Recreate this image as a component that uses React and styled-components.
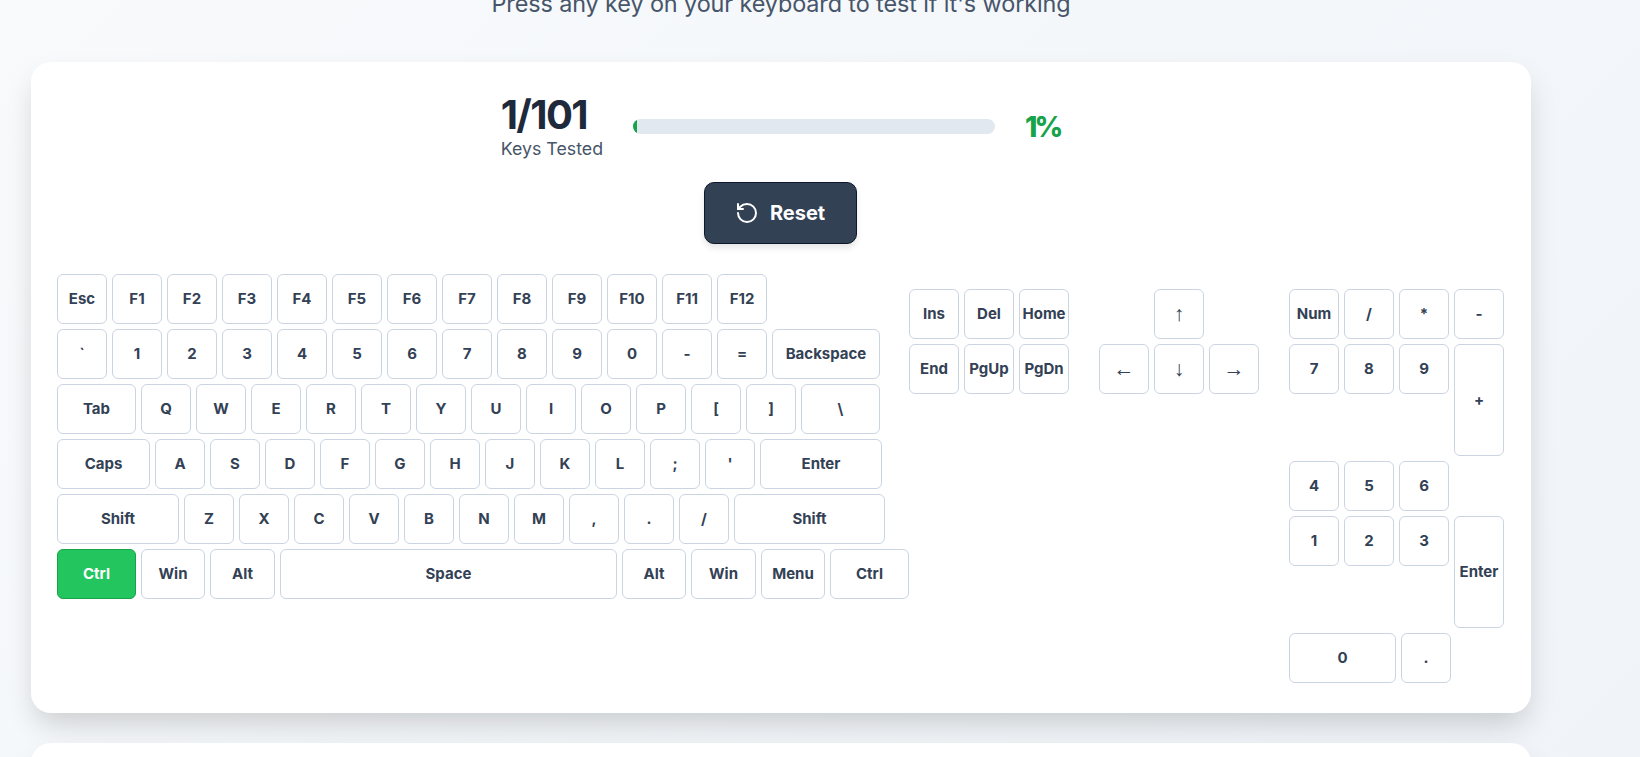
import React from 'react';
import styled, { createGlobalStyle } from 'styled-components';
import { RotateCcw } from 'lucide-react';

const Global = createGlobalStyle`
  html, body { margin: 0; padding: 0; height: 757px; overflow: hidden; }
  body { font-family: Inter, "Noto Sans", sans-serif; background: linear-gradient(135deg, #f8fafc 0%, #f0f4f8 100%); }
`;
const Page = styled.div`
  margin-top: -12px;
  padding: 0 0 0 31px;
  width: 1500px;
`;
const Subtitle = styled.p`
  margin: 0 0 42px;
  height: 32px;
  line-height: 32px;
  text-align: center;
  font-size: 23.4px;
  letter-spacing: -0.1px;
  color: #475569;
`;
const Card = styled.section`
  background: #fff;
  border-radius: 20px;
  box-shadow: 0 15px 30px -5px rgba(0, 0, 0, 0.18);
  padding: 30px 27px 30px 26px;
  margin-bottom: 30px;
  height: ${p => p.$h || 'auto'};
  box-sizing: border-box;
`;
const Stats = styled.div`
  display: flex;
  align-items: center;
  justify-content: center;
  gap: 30px;
  height: 69px;
`;
const Count = styled.div`
  display: flex;
  flex-direction: column;
  margin-top: -1px;
`;
const Number = styled.div`
  font-size: 40px;
  line-height: 45px;
  font-weight: 700;
  letter-spacing: -1.6px;
  color: #1e293b;
`;
const Label = styled.div`
  font-size: 17.8px;
  line-height: 23px;
  color: #475569;
`;
const Track = styled.div`
  width: 362px;
  height: 15px;
  border-radius: 8px;
  background: #e2e8f0;
  overflow: hidden;
`;
const Fill = styled.div`
  height: 100%;
  background: #16a34a;
`;
const Percent = styled.div`
  font-size: 28px;
  font-weight: 800;
  letter-spacing: -3px;
  color: #16a34a;
`;
const ResetRow = styled.div`
  display: flex;
  justify-content: center;
  margin: 21px 0 30px;
`;
const ResetButton = styled.button`
  display: flex;
  align-items: center;
  justify-content: center;
  gap: 11px;
  width: 153px;
  height: 62px;
  padding: 0 0 0 2px;
  border: 1px solid #0f172a;
  border-radius: 10px;
  background: #334155;
  color: #fff;
  font-family: inherit;
  font-size: 20px;
  font-weight: 700;
  box-shadow: 0 4px 6px rgba(0, 0, 0, 0.1);
  svg { margin-left: -3px; }
`;
const Keyboard = styled.div`
  display: flex;
  align-items: flex-start;
`;
const Main = styled.div`
  flex: 0 0 852px;
  display: flex;
  flex-direction: column;
  gap: 5px;
`;
const Side = styled.div`
  display: flex;
  gap: 30px;
  margin-top: 15px;
`;
const Row = styled.div`
  display: flex;
  gap: 5px;
  align-items: flex-start;
`;
const Column = styled.div`
  display: flex;
  flex-direction: column;
  gap: 5px;
`;
const ArrowGrid = styled.div`
  display: grid;
  grid-template-columns: repeat(3, 50px);
  grid-auto-rows: 50px;
  gap: 5px;
`;
const Key = styled.div`
  flex: 0 0 auto;
  box-sizing: border-box;
  width: ${p => p.$w || 50}px;
  height: ${p => p.$h || 50}px;
  display: flex;
  align-items: center;
  justify-content: center;
  padding-bottom: 2px;
  border: 1px solid ${p => (p.$active ? '#16a34a' : '#cbd5e1')};
  border-radius: 6px;
  background: ${p => (p.$active ? '#22c55e' : '#fff')};
  color: ${p => (p.$active ? '#fff' : '#334155')};
  font-size: 15px;
  font-weight: 700;
  white-space: nowrap;
`;
const ArrowKey = styled(Key)`
  grid-column: ${p => p.$col};
  padding-bottom: 0;
  font-family: "Liberation Sans", sans-serif;
  font-size: 21px;
  font-weight: 400;
`;

const toKeys = s => s.split(' ').map(l => [l]);
const rows = [
  toKeys('Esc F1 F2 F3 F4 F5 F6 F7 F8 F9 F10 F11 F12'),
  [...toKeys('` 1 2 3 4 5 6 7 8 9 0 - ='), ['Backspace', 108]],
  [['Tab', 79], ...toKeys('Q W E R T Y U I O P [ ]'), ['\\', 79]],
  [['Caps', 93], ...toKeys("A S D F G H J K L ; '"), ['Enter', 122]],
  [['Shift', 122], ...toKeys('Z X C V B N M , . /'), ['Shift', 151]],
  [['Ctrl', 79, true], ['Win', 64], ['Alt', 65], ['Space', 337], ['Alt', 64], ['Win', 65], ['Menu', 64], ['Ctrl', 79]],
];
const numpad = [
  [['Num'], ['/'], ['*'], ['-']],
  [['7'], ['8'], ['9'], ['+', 50, 112]],
  [['4'], ['5'], ['6']],
  [['1'], ['2'], ['3'], ['Enter', 50, 112]],
  [['0', 107], ['.']],
];

export default function App() {
  return (
    <>
      <Global />
      <Page>
        <Subtitle>Press any key on your keyboard to test if it's working</Subtitle>
        <Card>
          <Stats>
            <Count>
              <Number>1/101</Number>
              <Label>Keys Tested</Label>
            </Count>
            <Track><Fill style={{ width: '1%' }} /></Track>
            <Percent>1%</Percent>
          </Stats>
          <ResetRow>
            <ResetButton><RotateCcw size={24} strokeWidth={2} />Reset</ResetButton>
          </ResetRow>
          <Keyboard>
            <Main>
              {rows.map((r, i) => (
                <Row key={i}>
                  {r.map(([l, w, a], j) => <Key key={j} $w={w} $active={a}>{l}</Key>)}
                </Row>
              ))}
            </Main>
            <Side>
              <Column>
                <Row><Key>Ins</Key><Key>Del</Key><Key>Home</Key></Row>
                <Row><Key>End</Key><Key>PgUp</Key><Key>PgDn</Key></Row>
              </Column>
              <ArrowGrid>
                <ArrowKey $col={2}>↑</ArrowKey>
                <ArrowKey $col={1}>←</ArrowKey>
                <ArrowKey $col={2}>↓</ArrowKey>
                <ArrowKey $col={3}>→</ArrowKey>
              </ArrowGrid>
              <Column>
                {numpad.map((r, i) => (
                  <Row key={i}>
                    {r.map(([l, w, h], j) => <Key key={j} $w={w} $h={h}>{l}</Key>)}
                  </Row>
                ))}
              </Column>
            </Side>
          </Keyboard>
        </Card>
        <Card $h="120px" />
      </Page>
    </>
  );
}
